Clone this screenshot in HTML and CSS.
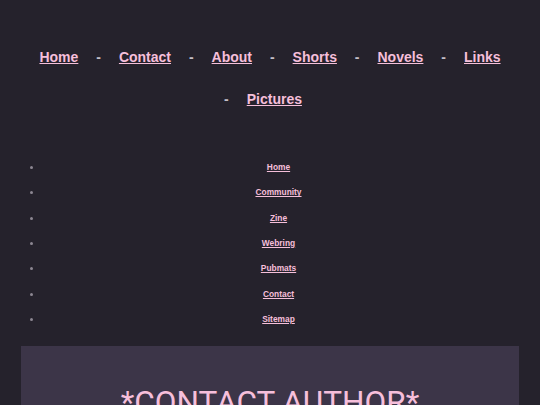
FILE: index.html
```html
<!DOCTYPE html>
<html lang="en">
<head>
<meta charset="utf-8">
<title>Contact Author</title>
<link rel="stylesheet" href="styles.css">
</head>
<body>
<nav class="topnav">
  <ul class="topnav-list">
    <li class="topnav-item"><a href="#">Home</a></li>
    <li class="topnav-item"><span class="sep">-</span><a href="#">Contact</a></li>
    <li class="topnav-item"><span class="sep">-</span><a href="#">About</a></li>
    <li class="topnav-item"><span class="sep">-</span><a href="#">Shorts</a></li>
    <li class="topnav-item"><span class="sep">-</span><a href="#">Novels</a></li>
    <li class="topnav-item"><span class="sep">-</span><a href="#">Links</a></li>
    <li class="topnav-item"><span class="sep">-</span><a href="#">Pictures</a></li>
  </ul>
</nav>
<ul class="sitenav">
  <li><a href="#">Home</a></li>
  <li><a href="#">Community</a></li>
  <li><a href="#">Zine</a></li>
  <li><a href="#">Webring</a></li>
  <li><a href="#">Pubmats</a></li>
  <li><a href="#">Contact</a></li>
  <li><a href="#">Sitemap</a></li>
</ul>
<main class="panel">
  <h1 class="panel-title">*CONTACT AUTHOR*</h1>
</main>
</body>
</html>
```
FILE: styles.css
```css
html, body {
  margin: 0;
  padding: 0;
  background: #25222c;
}
body {
  font-family: "Liberation Sans", Arial, sans-serif;
  color: #c4bfc8;
}
a {
  color: #f5bfda;
  font-weight: bold;
}
.topnav {
  padding-top: 37px;
}
.topnav-list {
  list-style: none;
  margin: 0;
  padding: 0;
  text-align: center;
  font-size: 14px;
  line-height: 41.5px;
}
.topnav-item {
  display: inline-block;
  margin-left: 14px;
}
.topnav-item:first-child {
  margin-left: 0;
}
.topnav-item:last-child {
  margin-right: 28px;
}
.sep {
  display: inline-block;
  font-weight: bold;
  margin-right: 18px;
}
.sitenav {
  margin: 35px 25px 0 21px;
  padding: 0 0 0 21px;
  font-size: 8.4px;
  line-height: 25.33px;
  text-align: center;
  color: #8c8792;
}
.panel {
  display: block;
  margin: 14px 21px 0;
  background: #3c3548;
  padding: 1px 0 40px;
}
.panel-title {
  margin: 37px 0 0;
  text-align: center;
  font-family: Roboto, "Liberation Sans", sans-serif;
  font-weight: normal;
  font-size: 31.5px;
  color: #f6bfdb;
}
```
